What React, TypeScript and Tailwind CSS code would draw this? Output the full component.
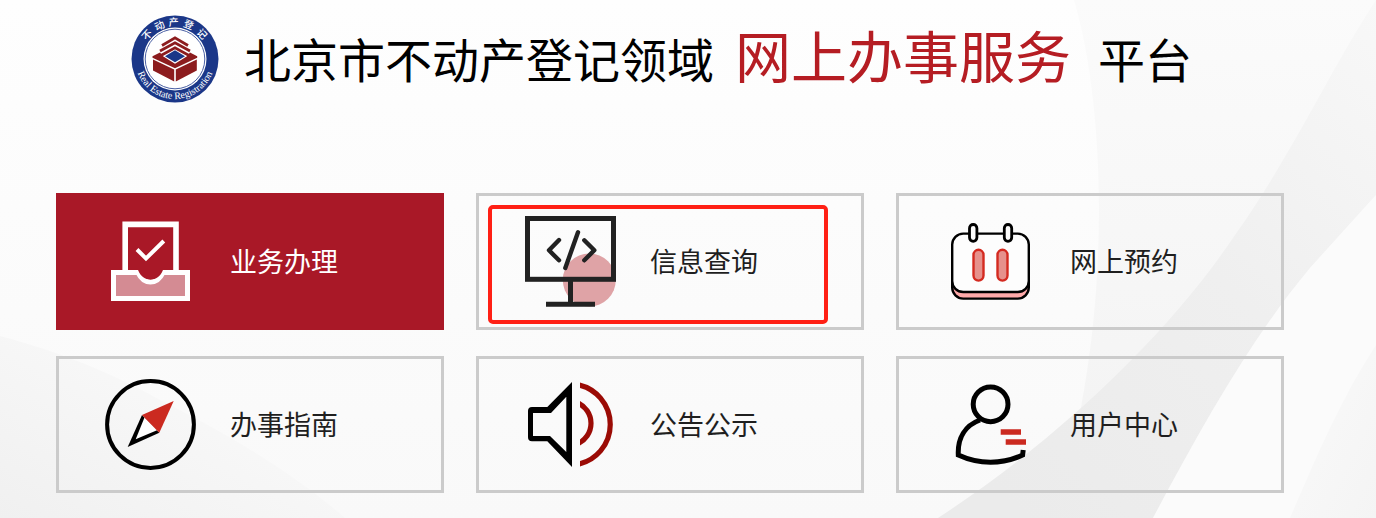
import type { ReactNode } from "react";

const RED = "#cb2a20";

function Backdrop() {
  return (
    <svg
      className="absolute inset-0 -z-10 h-full w-full"
      viewBox="0 0 1376 518"
      preserveAspectRatio="none"
      aria-hidden="true"
    >
      <defs>
        <linearGradient id="page" x1="0" y1="0" x2="0" y2="1">
          <stop offset="0" stopColor="#fefefe" />
          <stop offset="1" stopColor="#f9f9f9" />
        </linearGradient>
        <linearGradient id="veil" x1="0" y1="0" x2="0" y2="1">
          <stop offset="0" stopColor="#fbfbfb" />
          <stop offset="1" stopColor="#f2f2f2" />
        </linearGradient>
        <linearGradient id="band" x1="1" y1="0" x2="0.2" y2="1">
          <stop offset="0" stopColor="#f8f8f8" />
          <stop offset="0.5" stopColor="#efefef" />
          <stop offset="1" stopColor="#ebebeb" />
        </linearGradient>
        <linearGradient id="hill" x1="0" y1="1" x2="0.7" y2="0.3">
          <stop offset="0" stopColor="#f0f0f0" />
          <stop offset="1" stopColor="#f9f9f9" />
        </linearGradient>
        <linearGradient id="corner" x1="1" y1="1" x2="0" y2="0">
          <stop offset="0" stopColor="#f4f4f4" />
          <stop offset="1" stopColor="#fafafa" />
        </linearGradient>
      </defs>
      <rect width="1376" height="518" fill="url(#page)" />
      <path d="M0 336C60 352 110 372 160 400C220 430 290 470 345 518H0Z" fill="url(#hill)" />
      <path d="M1074 0C1092 60 1099 140 1099 210C1099 330 1080 430 1055 518H1376V0Z" fill="url(#veil)" />
      <path d="M1376 0C1330 70 1295 150 1235 235C1165 340 1050 445 938 518H1153C1200 430 1250 340 1310 268L1376 195Z" fill="url(#band)" />
      <path d="M1376 195L1310 268C1250 340 1200 430 1153 518H1376Z" fill="#fbfbfb" />
      <path d="M1376 345C1340 400 1315 460 1290 518H1376Z" fill="url(#corner)" />
    </svg>
  );
}

const SEAL_GLYPHS = [
  { char: "不", turn: "rotate(-49 44 44)" },
  { char: "动", turn: "rotate(-25 44 44)" },
  { char: "产", turn: "rotate(-2 44 44)" },
  { char: "登", turn: "rotate(22 44 44)" },
  { char: "记", turn: "rotate(47 44 44)" },
];

function Seal() {
  return (
    <svg className="h-[88px] w-[88px] shrink-0" viewBox="0 0 88 88" role="img" aria-label="不动产登记">
      <defs>
        <path id="seal-arc" d="M4 44A40 40 0 0 0 84 44" />
      </defs>
      <circle cx="44" cy="44" r="43.5" fill="#1b3788" />
      <circle cx="44" cy="44" r="31.5" fill="#fff" />
      <circle cx="44" cy="44" r="29.8" fill="none" stroke="#4a60a4" strokeWidth="1" />
      <g fill="none" stroke="#8c1c1e" strokeWidth="2.8">
        <path d="M31 30.5L44 22.8L57 30.5" />
        <path d="M29 36L44 27.8L59 36" />
        <path d="M29 41L44 32.8L59 41" />
      </g>
      <path d="M44 35.3L54 41.3L44 47.3L34 41.3Z" fill="#1b3788" />
      <path d="M21.5 41.2L29 37.5L32 41.3L44 48.8L56 41.3L59 37.5L66.2 41.2V42.8L44 53.2L21.5 42.8Z" fill="#8c1c1e" />
      <path d="M22 44.6L43.2 54.6V66.6L22 55.4Z" fill="#8c1c1e" />
      <path d="M65.8 44.6L44.8 54.6V66.6L65.8 55.4Z" fill="#8c1c1e" />
      <g fill="#fff" fontFamily="'Noto Sans CJK SC', sans-serif" fontSize="10" fontWeight="500" textAnchor="middle">
        {SEAL_GLYPHS.map(({ char, turn }) => (
          <text key={char} x="44" y="10.7" transform={turn}>
            {char}
          </text>
        ))}
      </g>
      <text fill="#fff" fontFamily="'Liberation Serif', serif" fontSize="10" textAnchor="middle">
        <textPath href="#seal-arc" startOffset="50%">
          Real Estate Registration
        </textPath>
      </text>
    </svg>
  );
}

function TrayIcon() {
  return (
    <>
      <path d="M20.2 55V8.4H71V55" fill="none" stroke="#fff" strokeWidth="5.6" />
      <path
        d="M8.5 56.6H33C36 62.8 40 66 45.5 66S55 62.8 58 56.6H82.5V82.5H8.5Z"
        fill="#d48b93"
        stroke="#fff"
        strokeWidth="5"
      />
      <path d="M33 54C36 61 40 63.4 45.5 63.4S55 61 58 54Z" fill="#a91827" />
      <path d="M32 33.5L41 42.5L58.8 25" fill="none" stroke="#fff" strokeWidth="4" />
    </>
  );
}

function MonitorIcon() {
  return (
    <>
      <circle cx="64.3" cy="64" r="26.5" fill="#dfa3a6" />
      <g fill="none" stroke="#222" strokeWidth="5">
        <rect x="2.5" y="2.5" width="86" height="60.8" />
        <path d="M45.5 64V87M21 88.3H70" />
        <path
          d="M34 24L24 34.3L34 44.3M53 16.3L40.3 52M59.3 24.3L69.3 34.3L59.3 44.3"
          strokeWidth="4.4"
          strokeLinecap="round"
          strokeLinejoin="round"
        />
      </g>
    </>
  );
}

function CalendarIcon() {
  return (
    <>
      <g stroke="#000" strokeWidth="2.4">
        <rect x="7.2" y="24" width="76.6" height="58.6" rx="11" fill="#ffa9a9" />
        <rect x="7.2" y="17.6" width="76.6" height="58.4" rx="11" fill="#fdfdfd" />
      </g>
      <g stroke="#000" strokeWidth="2.8" fill="#fdfdfd">
        <rect x="24.5" y="8.5" width="7.4" height="16.8" rx="3.7" />
        <rect x="59.3" y="8.5" width="7.4" height="16.8" rx="3.7" />
      </g>
      <g stroke="#d42a20" strokeWidth="2.4" fill="#e6918c">
        <rect x="28.5" y="33.8" width="10" height="30.8" rx="5" />
        <rect x="52.5" y="33.8" width="10" height="30.8" rx="5" />
      </g>
    </>
  );
}

function CompassIcon() {
  return (
    <>
      <circle cx="45.5" cy="45.5" r="43.4" fill="none" stroke="#000" strokeWidth="4" />
      <path d="M37 36L22.7 68L54.3 53.7Z" fill="#000" />
      <path d="M39.5 38.5L30.7 60.3L52 51.3Z" fill="#fff" />
      <path d="M68.7 22L37 36L54.3 53.7Z" fill={RED} />
    </>
  );
}

function SpeakerIcon() {
  return (
    <>
      <defs>
        <clipPath id="waves">
          <rect x="55" y="0" width="36" height="91" />
        </clipPath>
      </defs>
      <path
        fillRule="evenodd"
        d="M7 28H22.3L47 3V88L22.3 62.3H7Q3 62.3 3 58.3V32Q3 28 7 28ZM8 34V57H25L41.3 73V17.7L26 34Z"
        fill="#000"
      />
      <g clipPath="url(#waves)" fill="none" stroke="#9b0b05" strokeWidth="5.2">
        <path d="M51 5.4A40.6 40.6 0 0 1 51 85.6" />
        <path d="M52 23.6A22.3 22.3 0 0 1 52 65" />
      </g>
    </>
  );
}

function UserIcon() {
  return (
    <>
      <g fill="none" stroke="#000" strokeWidth="5">
        <circle cx="45.6" cy="25.3" r="17.4" />
        <path d="M35 41C20 46.5 12.5 59 13.3 76C34 85.6 57 85.6 77.6 76L78.2 71" />
      </g>
      <path d="M55.7 50.3H76V55.7H55.7ZM60.7 60.3H81V65.7H60.7Z" fill={RED} />
    </>
  );
}

type Service = { label: string; icon: ReactNode; active?: boolean; marked?: boolean };

const SERVICES: Service[] = [
  { label: "业务办理", icon: <TrayIcon />, active: true },
  { label: "信息查询", icon: <MonitorIcon />, marked: true },
  { label: "网上预约", icon: <CalendarIcon /> },
  { label: "办事指南", icon: <CompassIcon /> },
  { label: "公告公示", icon: <SpeakerIcon /> },
  { label: "用户中心", icon: <UserIcon /> },
];

function ServiceCard({ label, icon, active, marked }: Service) {
  const tone = active
    ? "border-[#a91827] bg-[#a91827] text-white"
    : "border-[#cbcbcb] text-[#1f1f1f]";
  return (
    <a
      href="#"
      className={`relative flex min-h-[137px] items-center gap-[34px] border-[3px] pl-[46px] ${tone}`}
    >
      <svg className="h-[91px] w-[91px] shrink-0" viewBox="0 0 91 91" aria-hidden="true">
        {icon}
      </svg>
      <span className="pb-0.5 text-[27px] leading-10 whitespace-nowrap">{label}</span>
      {marked && (
        <span className="pointer-events-none absolute top-[9px] left-[9px] h-[119px] w-[340px] rounded-[5px] border-4 border-[#ff2015]" />
      )}
    </a>
  );
}

export default function App() {
  return (
    <div className="relative isolate min-h-screen overflow-hidden pb-6 font-['Noto_Sans_CJK_SC',sans-serif]">
      <Backdrop />
      <header className="flex items-start gap-[25px] pt-[15px] pl-[131px]">
        <Seal />
        <h1 className="flex items-baseline text-[47px] leading-[78px] whitespace-nowrap text-black">
          <span>北京市不动产登记领域</span>
          <span className="ml-[21px] text-[56px] text-[#b51d23]">网上办事服务</span>
          <span className="ml-[27px]">平台</span>
        </h1>
      </header>
      <main className="mt-[90px] mr-[92px] ml-14 grid grid-cols-3 gap-x-8 gap-y-[26px]">
        {SERVICES.map((service) => (
          <ServiceCard key={service.label} {...service} />
        ))}
      </main>
    </div>
  );
}
